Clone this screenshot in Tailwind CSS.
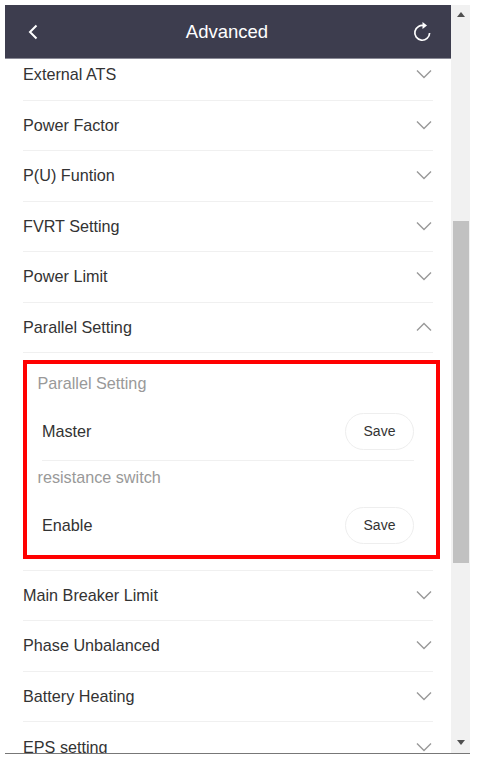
<!DOCTYPE html>
<html lang="en">
<head>
    <meta charset="UTF-8">
    <meta name="viewport" content="width=device-width, initial-scale=1.0">
    <title>Advanced</title>
    <script src="https://cdn.jsdelivr.net/npm/@tailwindcss/browser@4"></script>
</head>
<body class="bg-white overflow-hidden font-['Liberation_Sans',Arial,sans-serif] text-[16.2px] text-[#333]">
    <div class="w-[478px] h-[759px] pt-[5px] pl-[5px] pr-[8px] pb-[5px]">
        <div class="flex h-[749px] border-b border-[#777]">
            <!-- page -->
            <div class="w-[446px] h-full overflow-hidden flex flex-col">
                <header class="h-[54px] shrink-0 bg-[#3d3d4e] border-b border-[#8a8a96] flex items-center justify-between pl-[21px] pr-[19px] text-white">
                    <svg width="14" height="18" viewBox="0 0 14 18" fill="none" stroke="#fff" stroke-width="2"><path d="M10.5 2.5 4 9l6.5 6.5"/></svg>
                    <span class="text-[18.5px] ml-[2px]">Advanced</span>
                    <svg width="20" height="22" viewBox="0 0 20 22" fill="none" stroke="#fff" stroke-width="1.7"><path d="M12.5 4.8A7.4 7.4 0 1 0 17.6 12"/><path d="M10.5 1 15 4.6l-4.5 3.4z" fill="#fff" stroke="none"/></svg>
                </header>

                <div class="px-[18px]">
                    <div class="h-[41.5px] flex items-start justify-between border-b border-[#f0f0f0] pt-[5px] pr-[1.5px]">
                        <span class="leading-[21px]">External ATS</span>
                        <svg class="mt-[5px]" width="16" height="10" viewBox="0 0 16 10" fill="none" stroke="#999" stroke-width="1.4"><path d="M1 1.5l7 7 7-7"/></svg>
                    </div>
                    <div class="h-[50.5px] flex items-center justify-between border-b border-[#f0f0f0] pr-[1.5px] pb-[1px]">
                        <span>Power Factor</span>
                        <svg width="16" height="10" viewBox="0 0 16 10" fill="none" stroke="#999" stroke-width="1.4"><path d="M1 1.5l7 7 7-7"/></svg>
                    </div>
                    <div class="h-[50.5px] flex items-center justify-between border-b border-[#f0f0f0] pr-[1.5px] pb-[1px]">
                        <span>P(U) Funtion</span>
                        <svg width="16" height="10" viewBox="0 0 16 10" fill="none" stroke="#999" stroke-width="1.4"><path d="M1 1.5l7 7 7-7"/></svg>
                    </div>
                    <div class="h-[50.5px] flex items-center justify-between border-b border-[#f0f0f0] pr-[1.5px] pb-[1px]">
                        <span>FVRT Setting</span>
                        <svg width="16" height="10" viewBox="0 0 16 10" fill="none" stroke="#999" stroke-width="1.4"><path d="M1 1.5l7 7 7-7"/></svg>
                    </div>
                    <div class="h-[50.5px] flex items-center justify-between border-b border-[#f0f0f0] pr-[1.5px] pb-[1px]">
                        <span>Power Limit</span>
                        <svg width="16" height="10" viewBox="0 0 16 10" fill="none" stroke="#999" stroke-width="1.4"><path d="M1 1.5l7 7 7-7"/></svg>
                    </div>
                    <div class="h-[50.5px] flex items-center justify-between border-b border-[#f0f0f0] pr-[1.5px]">
                        <span>Parallel Setting</span>
                        <svg width="16" height="10" viewBox="0 0 16 10" fill="none" stroke="#999" stroke-width="1.4"><path d="M1 8.5l7-7 7 7"/></svg>
                    </div>

                    <!-- expanded section -->
                    <div class="w-[417px] h-[199px] mt-[7px] border-4 border-[#f00] pl-[10px] pr-[22px]">
                        <div class="h-[40px] pt-[3px] pl-[0.5px] text-[#999] leading-[32px]">Parallel Setting</div>
                        <div class="ml-[5px] h-[57px] flex items-center justify-between border-b border-[#f0f0f0] pb-[1px]">
                            <span>Master</span>
                            <button class="w-[69px] h-[37px] rounded-full border border-[#eee] text-[14px] text-[#333] bg-white">Save</button>
                        </div>
                        <div class="h-[36px] pl-[0.5px] text-[#999] leading-[33px]">resistance switch</div>
                        <div class="ml-[5px] h-[57px] flex items-center justify-between">
                            <span>Enable</span>
                            <button class="w-[69px] h-[37px] rounded-full border border-[#eee] text-[14px] text-[#333] bg-white">Save</button>
                        </div>
                    </div>

                    <div class="h-[11.5px] border-b border-[#f0f0f0]"></div>
                    <div class="h-[50.5px] flex items-center justify-between border-b border-[#f0f0f0] pr-[1.5px] pb-[1px]">
                        <span>Main Breaker Limit</span>
                        <svg width="16" height="10" viewBox="0 0 16 10" fill="none" stroke="#999" stroke-width="1.4"><path d="M1 1.5l7 7 7-7"/></svg>
                    </div>
                    <div class="h-[50.5px] flex items-center justify-between border-b border-[#f0f0f0] pr-[1.5px] pb-[1px]">
                        <span>Phase Unbalanced</span>
                        <svg width="16" height="10" viewBox="0 0 16 10" fill="none" stroke="#999" stroke-width="1.4"><path d="M1 1.5l7 7 7-7"/></svg>
                    </div>
                    <div class="h-[50.5px] flex items-center justify-between border-b border-[#f0f0f0] pr-[1.5px] pb-[1px]">
                        <span>Battery Heating</span>
                        <svg width="16" height="10" viewBox="0 0 16 10" fill="none" stroke="#999" stroke-width="1.4"><path d="M1 1.5l7 7 7-7"/></svg>
                    </div>
                    <div class="h-[50.5px] flex items-center justify-between border-b border-[#f0f0f0] pr-[1.5px]">
                        <span>EPS setting</span>
                        <svg width="16" height="10" viewBox="0 0 16 10" fill="none" stroke="#999" stroke-width="1.4"><path d="M1 1.5l7 7 7-7"/></svg>
                    </div>
                </div>
            </div>

            <!-- scrollbar -->
            <div class="w-[19px] h-full bg-[#f1f1f1] flex flex-col items-center">
                <div class="w-0 h-0 mt-[7px] border-x-[4px] border-x-transparent border-b-[5px] border-b-[#505050]"></div>
                <div class="w-[16px] h-[342px] mt-[204px] bg-[#c1c1c1]"></div>
                <div class="w-0 h-0 mt-[177px] border-x-[4px] border-x-transparent border-t-[5px] border-t-[#505050]"></div>
            </div>
        </div>
    </div>
</body>
</html>
